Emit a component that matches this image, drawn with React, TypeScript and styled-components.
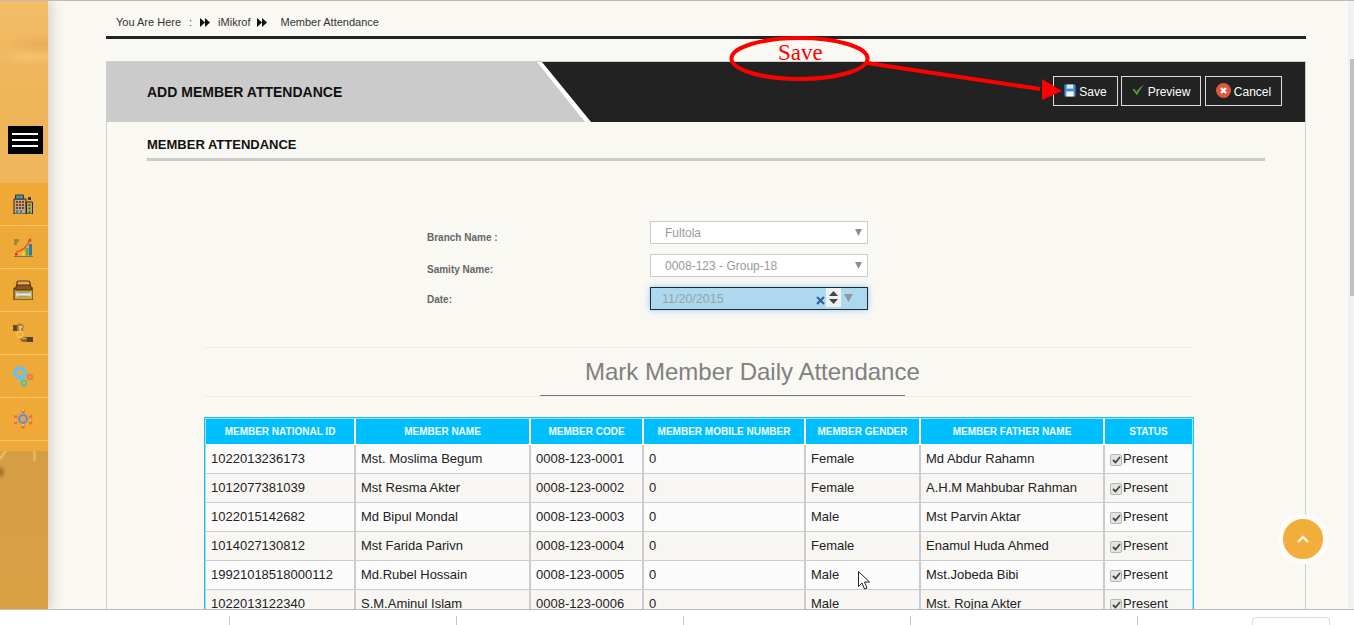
import React from "react";
import styled, { createGlobalStyle } from "styled-components";

const Global = createGlobalStyle`
  html, body { margin: 0; padding: 0; height: 100%; overflow: hidden; background: #f9f8f3; }
  body { font-family: "Liberation Sans", Arial, sans-serif; color: #222; }
  * { box-sizing: border-box; }
`;

const Page = styled.div`
  position: relative;
  width: 1354px;
  height: 625px;
  display: flex;
  flex-direction: column;
  overflow: hidden;
  border-top: 1px solid #bdbdb8;
`;
const Middle = styled.div`
  flex: 1;
  min-height: 0;
  display: flex;
  overflow: hidden;
`;
const Sidebar = styled.aside`
  width: 48px;
  flex: none;
  display: flex;
  flex-direction: column;
  position: relative;
  z-index: 2;
  box-shadow: 3px 0 12px rgba(70, 70, 60, 0.24);
`;
const SidebarTop = styled.div`
  height: 182px;
  flex: none;
  padding: 125px 0 0 8px;
  background:
    radial-gradient(ellipse 34px 9px at 40px 43px, rgba(222, 165, 80, 0.6), transparent),
    radial-gradient(ellipse 34px 7px at 30px 56px, rgba(248, 208, 135, 0.45), transparent),
    linear-gradient(180deg, #f2bd66 0%, #eeb458 55%, #f0b75d 100%);
`;
const Burger = styled.button`
  width: 35px;
  height: 28px;
  border: 0;
  padding: 7px 5px 7px 4px;
  background: #000;
  display: flex;
  flex-direction: column;
  justify-content: space-between;
`;
const BurgerBar = styled.span`
  display: block;
  height: 2px;
  background: #fff;
`;
const SideList = styled.nav`
  flex: none;
  background: #efa936;
  padding-bottom: 10px;
`;
const SideItem = styled.div`
  height: 43px;
  border-bottom: 1px solid #fbc25f;
  display: flex;
  align-items: center;
  padding-left: 13px;
`;
const SidebarBottom = styled.div`
  flex: 1;
  background:
    linear-gradient(125deg, transparent 0 6%, rgba(245, 200, 120, 0.65) 6% 11%, transparent 11% 100%) 0 0 / 48px 24px no-repeat,
    linear-gradient(90deg, transparent 0 68%, rgba(240, 190, 110, 0.6) 68% 76%, transparent 76% 100%) 0 0 / 48px 10px no-repeat,
    radial-gradient(ellipse 5px 7px at 1px 21px, rgba(130, 90, 30, 0.7), transparent),
    linear-gradient(180deg, #d59e44 0%, #d8a144 100%);
`;

const Content = styled.main`
  flex: 1;
  min-width: 0;
  padding: 0 42px 0 58px;
  background: #f9f8f3;
`;
const Crumbs = styled.div`
  height: 35px;
  padding: 7px 0 0 10px;
  display: flex;
  align-items: center;
  font-size: 11px;
  line-height: 13px;
  color: #333;
`;
const CrumbText = styled.span<{ $before?: number; $after: number }>`
  margin-left: ${(p) => p.$before ?? 0}px;
  margin-right: ${(p) => p.$after}px;
  white-space: nowrap;
`;
const CrumbBar = styled.div`
  height: 3px;
  background: #222;
`;

const Panel = styled.section`
  margin-top: 22px;
  width: 1200px;
  border: 1px solid #cfcfca;
  border-bottom: 0;
  min-height: 700px;
`;
const PanelHead = styled.header`
  height: 60px;
  background: #222;
  display: flex;
  justify-content: space-between;
  align-items: flex-start;
`;
const TitleEdge = styled.div`
  width: 484px;
  height: 60px;
  background: #fff;
  clip-path: polygon(0 0, 435px 0, 100% 100%, 0 100%);
`;
const TitleBlock = styled.div`
  height: 60px;
  background: #cbcbcb;
  clip-path: polygon(0 0, 430px 0, 478px 100%, 0 100%);
  padding-left: 40px;
  display: flex;
  align-items: center;
`;
const PanelTitle = styled.h1`
  margin: 0;
  font-size: 14px;
  font-weight: 700;
  color: #111;
`;
const Actions = styled.div`
  display: flex;
  margin: 14px 23px 0 0;
  gap: 3px;
`;
const ActionBtn = styled.button<{ $w: number; $ml?: number }>`
  width: ${(p) => p.$w}px;
  margin-left: ${(p) => p.$ml ?? 0}px;
  height: 30px;
  background: #222;
  border: 1px solid #dcdcdc;
  color: #fff;
  font: 12px "Liberation Sans", Arial, sans-serif;
  display: flex;
  align-items: center;
  justify-content: center;
  gap: 3px;
  padding: 1px 0 0;
`;

const PanelBody = styled.div`
  padding: 0 40px;
`;
const SectionTitle = styled.h2`
  margin: 0;
  padding: 15px 0 5px;
  font-size: 13px;
  line-height: 16px;
  font-weight: 700;
  color: #111;
  border-bottom: 3px solid #cbcbc8;
`;
const Form = styled.form`
  margin-top: 60px;
  display: grid;
  grid-template-columns: 223px 218px;
  row-gap: 10px;
  margin-left: 280px;
`;
const FieldLabel = styled.label<{ $drop: number }>`
  font-size: 10px;
  line-height: 12px;
  font-weight: 700;
  color: #666;
  padding-top: ${(p) => p.$drop}px;
`;
const SelectBox = styled.div`
  height: 23px;
  background: #fff;
  border: 1px solid #ccc;
  display: flex;
  align-items: center;
  justify-content: space-between;
  padding: 0 5px 0 14px;
  font-size: 12px;
  color: #999;
`;
const DateBox = styled.div`
  height: 23px;
  background: #aed8ee;
  border: 1px solid #1c2b3a;
  box-shadow: 0 0 6px rgba(82, 168, 236, 0.6);
  display: flex;
  align-items: center;
  padding: 0 0 0 11px;
  font-size: 12.5px;
  color: #97a3a8;
`;
const DateValue = styled.span`
  flex: 1;
`;
const Spinner = styled.span`
  width: 15px;
  height: 19px;
  background: #eef2f3;
  display: flex;
  align-items: center;
  justify-content: center;
  margin: 0 1px 2px 1px;
`;

const AttendanceBlock = styled.div`
  margin: 37px 0 0 57px;
  width: 990px;
`;
const HeadingBand = styled.div`
  width: 988px;
  border-top: 1px solid #efeeea;
  border-bottom: 1px solid #efeeea;
`;
const Heading = styled.h3`
  margin: 0;
  padding-left: 381px;
  height: 47px;
  line-height: 47px;
  font-size: 24px;
  font-weight: 400;
  color: #808080;
  white-space: nowrap;
`;
const HeadingRule = styled.div`
  margin-left: 336px;
  width: 365px;
  height: 1px;
  background: #7a7a7a;
`;
const TableWrap = styled.div`
  margin-top: 20px;
  border: 1px solid #22bde0;
  padding: 1px;
  width: 990px;
  background: #9fe3f3;
`;
const Table = styled.table`
  table-layout: fixed;
  width: 986px;
  border-collapse: separate;
  border-spacing: 0;
`;
const Th = styled.th`
  height: 26px;
  padding: 0 0 1px;
  background: #00bfff;
  color: #f4fbff;
  font-size: 10px;
  font-weight: 700;
  text-align: center;
  border-right: 2px solid #fff;
  border-bottom: 1px solid #fff;
  &:last-child { border-right: 0; }
`;
const Tr = styled.tr<{ $even: boolean }>`
  background: ${(p) => (p.$even ? "#f7f6f2" : "#fbfbfb")};
`;
const Td = styled.td`
  height: 29px;
  padding: 0 0 1px 5px;
  font-size: 13px;
  color: #222;
  white-space: nowrap;
  border-right: 2px solid #ccc;
  border-bottom: 1px solid #ccc;
  &:last-child { border-right: 0; }
`;
const StatusCell = styled.span`
  display: flex;
  align-items: center;
`;
const CheckBox = styled.span`
  width: 12px;
  height: 12px;
  margin: 3px 1px 0 0;
  border: 1px solid #b5b5b5;
  border-radius: 2px;
  background: #e4e4e4;
  display: flex;
  align-items: center;
  justify-content: center;
`;

const ScrollTrack = styled.div`
  width: 6px;
  flex: none;
  background: #f1f1f1;
  padding: 58px 0 0 2px;
`;
const ScrollThumb = styled.div`
  height: 237px;
  background: #c1c1c1;
`;

const Footer = styled.footer`
  height: 16px;
  flex: none;
  background: #fff;
  border-top: 1px solid #bdbdb8;
  display: flex;
  padding-top: 6px;
  position: relative;
  z-index: 3;
`;
const FooterCell = styled.div<{ $w: number }>`
  width: ${(p) => p.$w}px;
  height: 9px;
  border-right: 1px solid #c8c8c8;
`;
const FooterPill = styled.div`
  margin: 1px 0 0 114px;
  width: 78px;
  height: 12px;
  border: 1px solid #ddd;
  border-bottom: 0;
  border-radius: 4px 4px 0 0;
`;

const Annotation = styled.svg`
  position: absolute;
  left: 0;
  top: -1px;
  width: 1354px;
  height: 120px;
  pointer-events: none;
  z-index: 4;
`;
const AnnotationText = styled.span`
  position: absolute;
  left: 778px;
  top: 39px;
  font: 23px/26px "Liberation Serif", "Times New Roman", serif;
  color: #f00;
  z-index: 5;
`;
const ToTop = styled.button`
  position: absolute;
  left: 1278px;
  top: 513px;
  width: 50px;
  height: 50px;
  border-radius: 50%;
  border: 5px solid #fdfcf9;
  background: #f2ae3a;
  padding: 0;
  display: flex;
  align-items: center;
  justify-content: center;
  z-index: 4;
`;
const Cursor = styled.svg`
  position: absolute;
  left: 858px;
  top: 570px;
  z-index: 4;
`;

const Tri = () => (
  <svg width="10" height="9" viewBox="0 0 10 9">
    <path d="M0 0l5 4.5L0 9zM5 0l5 4.5L5 9z" fill="#111" />
  </svg>
);
const Caret = () => (
  <svg width="7" height="7" viewBox="0 0 7 7">
    <path d="M0 0h7L3.500 7z" fill="#8f8f8f" />
  </svg>
);

const IconBuilding = () => (
  <svg width="20" height="20" viewBox="0 0 20 20">
    <path d="M1 5h12v15H1z" fill="#c9a27a" stroke="#33261c" />
    <path d="M2.500 1h8v4h-8z" fill="#3f9a9a" stroke="#4a2f3e" />
    {[7, 10, 13].map((y) =>
      [3, 6, 9].map((x) => <path key={`${x}-${y}`} d={`M${x} ${y}h2v2h-2z`} fill="#6d4530" />)
    )}
    <path d="M3 16h2v4H3zM7 16h2v4H7z" fill="#2d8f9c" />
    <path d="M13.500 8h6v12h-6z" fill="#b2ad5c" stroke="#33261c" />
    <path d="M15.500 10h2v2h-2zM15.500 13.500h2v2h-2zM15.500 17h2v3h-2z" fill="#3d6b45" />
    <path d="M15 3h3v3h-3z" fill="#4a3a30" />
  </svg>
);
const IconChart = () => (
  <svg width="20" height="20" viewBox="0 0 20 20">
    <path d="M1 2h5v3H4v3H1z" fill="#a8803c" />
    <path d="M1 19.500h19" stroke="#7e7550" />
    <path d="M2 16h2.500v2.500H2z" fill="#d9342a" />
    <path d="M9 15h3v3.500H9z" fill="#f2d23a" />
    <path d="M12.500 11h3v7.500h-3z" fill="#62a845" />
    <path d="M16 7h3v11.500h-3z" fill="#2a78b5" />
    <path d="M3 15c6-1 11-5 14-12" fill="none" stroke="#e2452c" strokeWidth="1.200" />
    <path d="M14.500 3.500L18 1l.5 4z" fill="#e2452c" />
  </svg>
);
const IconCase = () => (
  <svg width="20" height="20" viewBox="0 0 20 20">
    <path d="M1 8h19v12H1z" fill="#c9a63e" stroke="#33281a" />
    <path d="M4 8V3q0-2 2-2h9q2 0 2 2v5" fill="none" stroke="#3b3b3b" strokeWidth="1.200" />
    <path d="M3.500 5h14l1 5h-16z" fill="#8a5526" stroke="#4a2d14" />
    <path d="M4 13h13v3H4z" fill="#dfe6ea" stroke="#7a8a94" strokeWidth=".6" />
    <path d="M3 12.500h2v4H3zM16 12.500h2v4h-2z" fill="#cfd8dd" />
  </svg>
);
const IconHands = () => (
  <svg width="20" height="20" viewBox="0 0 20 20">
    <path d="M0 2h4v6H0z" fill="#5f4a2c" />
    <path d="M4 1q5-1.500 7 2l-1 5H4z" fill="#a88240" />
    <circle cx="7" cy="11.500" r="3" fill="none" stroke="#f4c268" strokeWidth="1.300" />
    <path d="M6 3h3.500v1.800H8v3H6.500z" fill="#f0c878" />
    <path d="M7 16q4-3 7-2v5h-4q-2 0-3-3z" fill="#8c6a34" />
    <path d="M14 14h6v5h-6z" fill="#59442a" />
    <path d="M9 15.500h4" stroke="#e3b664" />
  </svg>
);
const IconGears = () => (
  <svg width="21" height="21" viewBox="0 0 21 21">
    <circle cx="7" cy="7" r="4.600" fill="none" stroke="#5fc4f4" strokeWidth="3.400" />
    <circle cx="7" cy="7" r="6.400" fill="none" stroke="#5fc4f4" strokeWidth="1.500" strokeDasharray="2 2" />
    <circle cx="17" cy="11" r="2.300" fill="none" stroke="#ef7b4e" strokeWidth="2" />
    <circle cx="11" cy="17" r="2.300" fill="none" stroke="#58c39b" strokeWidth="2.200" />
  </svg>
);
const IconNetwork = () => (
  <svg width="20" height="20" viewBox="0 0 20 20">
    <circle cx="10" cy="10" r="4" fill="#d9a25e" stroke="#5f8fd0" strokeWidth="2" />
    <path d="M8.500 1h3.200v3.200H8.500zM8.500 16h3.200v3.500H8.500zM1 5.500h3.200v3.200H1zM16 5.500h3.200v3.200H16zM1 12h3.200v3.200H1zM16 12h3.200v3.200H16z" fill="#f0694a" />
    <path d="M9 .5h2v1.500H9zM9 15.500h2V17H9zM2 5h1.500v1.500H2zM16.500 5H18v1.500h-1.500zM2 11.500h1.500V13H2zM16.500 11.500H18V13h-1.500z" fill="#f7c07e" />
  </svg>
);

const IconSave = () => (
  <svg width="12" height="13" viewBox="0 0 13 14" style={{ marginBottom: 3 }}>
    <path d="M.5.5h11l1 1v12H.5z" fill="#3f8fd2" />
    <path d="M3 .5h7v4.500H3z" fill="#d5e6f4" />
    <path d="M2.500 8h8v5.500h-8z" fill="#eef4f9" />
  </svg>
);
const IconCheck = () => (
  <svg width="13" height="12" viewBox="0 0 13 12" style={{ marginBottom: 3 }}>
    <path d="M.5 5.500l2-.8 2 3.300C6 5 9 2 12.500.5 9.500 3.500 7 7 5 11.500z" fill="#4d9a3a" />
  </svg>
);
const IconCancel = () => (
  <svg width="15" height="15" viewBox="0 0 15 15" style={{ marginBottom: 2 }}>
    <circle cx="7.500" cy="7.500" r="7.500" fill="#db5a3b" />
    <path d="M5 5l5 5M10 5l-5 5" stroke="#fff" strokeWidth="2.200" />
  </svg>
);

const cols = [150, 175, 113, 162, 115, 184, 87];
const headers = [
  "MEMBER NATIONAL ID",
  "MEMBER NAME",
  "MEMBER CODE",
  "MEMBER MOBILE NUMBER",
  "MEMBER GENDER",
  "MEMBER FATHER NAME",
  "STATUS",
];
const rows = [
  ["1022013236173", "Mst. Moslima Begum", "0008-123-0001", "0", "Female", "Md Abdur Rahamn"],
  ["1012077381039", "Mst Resma Akter", "0008-123-0002", "0", "Female", "A.H.M Mahbubar Rahman"],
  ["1022015142682", "Md Bipul Mondal", "0008-123-0003", "0", "Male", "Mst Parvin Aktar"],
  ["1014027130812", "Mst Farida Parivn", "0008-123-0004", "0", "Female", "Enamul Huda Ahmed"],
  ["19921018518000112", "Md.Rubel Hossain", "0008-123-0005", "0", "Male", "Mst.Jobeda Bibi"],
  ["1022013122340", "S.M.Aminul Islam", "0008-123-0006", "0", "Male", "Mst. Rojna Akter"],
];

export default function App() {
  return (
    <Page>
      <Global />
      <Middle>
        <Sidebar>
          <SidebarTop>
            <Burger aria-label="menu">
              <BurgerBar />
              <BurgerBar />
              <BurgerBar />
            </Burger>
          </SidebarTop>
          <SideList>
            <SideItem><IconBuilding /></SideItem>
            <SideItem><IconChart /></SideItem>
            <SideItem><IconCase /></SideItem>
            <SideItem><IconHands /></SideItem>
            <SideItem><IconGears /></SideItem>
            <SideItem><IconNetwork /></SideItem>
          </SideList>
          <SidebarBottom />
        </Sidebar>
        <Content>
          <Crumbs>
            <CrumbText $after={8}>You Are Here</CrumbText>
            <CrumbText $after={8}>:</CrumbText>
            <Tri />
            <CrumbText $before={8} $after={7}>iMikrof</CrumbText>
            <Tri />
            <CrumbText $before={13} $after={0}>Member Attendance</CrumbText>
          </Crumbs>
          <CrumbBar />
          <Panel>
            <PanelHead>
              <TitleEdge>
                <TitleBlock>
                  <PanelTitle>ADD MEMBER ATTENDANCE</PanelTitle>
                </TitleBlock>
              </TitleEdge>
              <Actions>
                <ActionBtn $w={65}><IconSave />Save</ActionBtn>
                <ActionBtn $w={80}><IconCheck />Preview</ActionBtn>
                <ActionBtn $w={77} $ml={1}><IconCancel />Cancel</ActionBtn>
              </Actions>
            </PanelHead>
            <PanelBody>
              <SectionTitle>MEMBER ATTENDANCE</SectionTitle>
              <Form>
                <FieldLabel $drop={11}>Branch Name :</FieldLabel>
                <SelectBox>Fultola<Caret /></SelectBox>
                <FieldLabel $drop={10}>Samity Name:</FieldLabel>
                <SelectBox>0008-123 - Group-18<Caret /></SelectBox>
                <FieldLabel $drop={7}>Date:</FieldLabel>
                <DateBox>
                  <DateValue>11/20/2015</DateValue>
                  <svg width="9" height="9" viewBox="0 0 9 9" style={{ marginTop: 3 }}>
                    <path d="M1 1l7 7M8 1L1 8" stroke="#2f5f9e" strokeWidth="2" />
                  </svg>
                  <Spinner>
                    <svg width="9" height="13" viewBox="0 0 9 13">
                      <path d="M4.500 0L9 5H0zM0 8h9l-4.500 5z" fill="#444" />
                    </svg>
                  </Spinner>
                  <svg width="9" height="8" viewBox="0 0 9 8" style={{ marginLeft: 2, marginBottom: 2 }}>
                    <path d="M0 0h9L4.500 8z" fill="#8f9a9e" />
                  </svg>
                  <span style={{ width: 14 }} />
                </DateBox>
              </Form>
              <AttendanceBlock>
                <HeadingBand>
                  <Heading>Mark Member Daily Attendance</Heading>
                  <HeadingRule />
                </HeadingBand>
                <TableWrap>
                  <Table>
                    <colgroup>
                      {cols.map((w, i) => <col key={i} width={w} />)}
                    </colgroup>
                    <thead>
                      <tr>{headers.map((h) => <Th key={h}>{h}</Th>)}</tr>
                    </thead>
                    <tbody>
                      {rows.map((r, i) => (
                        <Tr key={r[2]} $even={i % 2 === 1}>
                          {r.map((c, j) => <Td key={j}>{c}</Td>)}
                          <Td>
                            <StatusCell>
                              <CheckBox>
                                <svg width="9" height="8" viewBox="0 0 9 8">
                                  <path d="M1 4l2.500 2.500L8 1" fill="none" stroke="#444" strokeWidth="1.800" />
                                </svg>
                              </CheckBox>
                              Present
                            </StatusCell>
                          </Td>
                        </Tr>
                      ))}
                    </tbody>
                  </Table>
                </TableWrap>
              </AttendanceBlock>
            </PanelBody>
          </Panel>
        </Content>
        <ScrollTrack><ScrollThumb /></ScrollTrack>
      </Middle>
      <Footer>
        <FooterCell $w={230} />
        <FooterCell $w={227} />
        <FooterCell $w={227} />
        <FooterCell $w={227} />
        <FooterCell $w={227} />
        <FooterPill />
      </Footer>

      <Annotation viewBox="0 0 1354 120">
        <ellipse cx="799.500" cy="58.500" rx="68" ry="20.500" fill="none" stroke="#f00" strokeWidth="4" />
        <path d="M867 63L1040 89" stroke="#f00" strokeWidth="4" />
        <path d="M1062 91L1042 79L1042 100z" fill="#f00" />
      </Annotation>
      <AnnotationText>Save</AnnotationText>
      <ToTop aria-label="top">
        <svg width="14" height="9" viewBox="0 0 14 9">
          <path d="M2 7l5-5 5 5" fill="none" stroke="#fdf4e0" strokeWidth="2.400" />
        </svg>
      </ToTop>
      <Cursor width="13" height="20" viewBox="0 0 13 20">
        <path d="M.5.5v15l3.500-3.500 2.500 6 2.500-1-2.500-6h5z" fill="#fff" stroke="#222" />
      </Cursor>
    </Page>
  );
}
